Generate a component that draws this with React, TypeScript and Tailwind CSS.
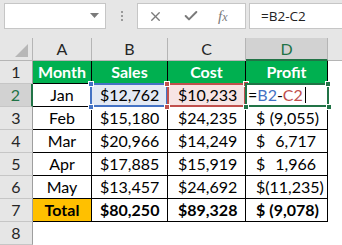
import { X, Check } from 'lucide-react';

const GREEN = 'bg-[#00b050]';

type Money = { v: string; neg?: boolean };

const rows: { m: string; s: Money; c: Money; p: Money }[] = [
  { m: 'Jan', s: { v: '12,762' }, c: { v: '10,233' }, p: { v: '2,529' } },
  { m: 'Feb', s: { v: '15,180' }, c: { v: '24,235' }, p: { v: '(9,055)', neg: true } },
  { m: 'Mar', s: { v: '20,966' }, c: { v: '14,249' }, p: { v: '6,717' } },
  { m: 'Apr', s: { v: '17,885' }, c: { v: '15,919' }, p: { v: '1,966' } },
  { m: 'May', s: { v: '13,457' }, c: { v: '24,692' }, p: { v: '(11,235)', neg: true } },
];

const RowHead = ({ n, active }: { n: number; active?: boolean }) => (
  <div
    className={
      active
        ? 'flex items-center justify-center border-b border-[#c6c6c6] border-r-2 border-r-[#217346] bg-[#d2d2d2] text-[#217346]'
        : 'flex items-center justify-center border-b border-[#c6c6c6] border-r border-r-[#9e9e9e] bg-[#e6e6e6] text-[#262626]'
    }
  >
    {n}
  </div>
);

const MoneyCell = ({ m, pl, bold }: { m: Money; pl: string; bold?: boolean }) => (
  <div
    className={`flex items-center justify-between border-b border-r border-black bg-white ${pl} ${
      m.neg ? 'pr-[8px]' : 'pr-[11px]'
    } ${bold ? 'font-bold' : ''}`}
  >
    <span>$</span>
    <span>{m.v}</span>
  </div>
);

const Handle = ({ pos, color }: { pos: string; color: string }) => (
  <span className={`absolute h-[6px] w-[6px] border border-white ${color} ${pos}`} />
);

export default function App() {
  return (
    <div className="h-[245px] w-[342px] overflow-hidden bg-[#e6e6e6] font-['Lato',sans-serif] text-[16px] text-black">
      {/* Name box + formula bar */}
      <div className="flex h-[38px] items-start pl-[4px] pt-[3px]">
        <div className="flex h-[26px] w-[102px] items-center justify-end border border-[#c6c6c6] bg-white pr-[6px]">
          <svg width="9" height="6" viewBox="0 0 9 6">
            <path d="M0 0h9L4.5 5z" fill="#7a7a7a" />
          </svg>
        </div>
        <div className="flex h-[26px] w-[31px] flex-col items-center justify-center gap-[2px]">
          <span className="h-[2px] w-[2px] bg-[#9a9a9a]" />
          <span className="h-[2px] w-[2px] bg-[#9a9a9a]" />
          <span className="h-[2px] w-[2px] bg-[#9a9a9a]" />
        </div>
        <div className="flex h-[26px] w-[109px] items-center border border-[#c6c6c6] bg-white pl-[10px] text-[#7a7a7a]">
          <X className="h-[15px] w-[15px]" strokeWidth={2.2} />
          <Check className="ml-[20px] h-[16px] w-[16px]" strokeWidth={3} />
          <span className="ml-[19px] font-['Liberation_Serif',serif] text-[15px] italic leading-none">
            f<span className="text-[12px]">x</span>
          </span>
        </div>
        <div className="ml-[3px] flex h-[26px] flex-1 items-center border border-r-0 border-[#c6c6c6] bg-white pl-[11px] font-['Open_Sans',sans-serif] text-[13.5px] text-[#222]">
          =B2-C2
        </div>
      </div>

      {/* Sheet */}
      <div className="grid grid-cols-[33px_59px_76px_78px_82px_1fr] auto-rows-[23px]">
        {/* column header row */}
        <div className="relative border-b border-r border-[#b5b5b5] bg-[#e6e6e6]">
          <svg className="absolute bottom-[3px] right-[4px]" width="13" height="13" viewBox="0 0 13 13">
            <path d="M13 0v13H0z" fill="#b7b7b7" />
          </svg>
        </div>
        {['A', 'B', 'C'].map((l) => (
          <div key={l} className="flex items-center justify-center border-b border-r border-[#b5b5b5] bg-[#e6e6e6] text-[#262626]">
            {l}
          </div>
        ))}
        <div className="flex items-center justify-center border-b-2 border-r border-b-[#217346] border-r-[#b5b5b5] bg-[#d2d2d2] text-[#217346]">
          D
        </div>
        <div className="border-b border-[#b5b5b5] bg-[#e6e6e6]" />

        {/* row 1 */}
        <RowHead n={1} />
        {['Month', 'Sales', 'Cost', 'Profit'].map((h) => (
          <div key={h} className={`flex items-center justify-center border-b border-r border-black ${GREEN} font-bold text-white`}>
            {h}
          </div>
        ))}
        <div className="bg-white" />

        {/* rows 2-6 */}
        {rows.map((r, i) => {
          const first = i === 0;
          return [
            <RowHead key={`h${i}`} n={i + 2} active={first} />,
            <div key={`a${i}`} className="flex items-center justify-center border-b border-r border-black bg-white">
              {r.m}
            </div>,
            first ? (
              <div key={`b${i}`} className="relative flex items-center justify-between border-b border-r border-black bg-[#e3e9f4] pl-[8px] pr-[11px]">
                <span>$</span>
                <span>{r.s.v}</span>
                <span className="absolute -bottom-px -left-[2px] -right-px -top-px border-2 border-[#4472c4]" />
                <Handle pos="-left-[4px] -top-[3px]" color="bg-[#4472c4]" />
                <Handle pos="-left-[4px] -bottom-[4px]" color="bg-[#4472c4]" />
              </div>
            ) : (
              <MoneyCell key={`b${i}`} m={r.s} pl="pl-[8px]" />
            ),
            first ? (
              <div key={`c${i}`} className="relative flex items-center justify-between border-b border-r border-black bg-[#f7e4e4] pl-[10px] pr-[11px]">
                <span>$</span>
                <span>{r.c.v}</span>
                <span className="absolute -bottom-px -left-px -right-px -top-px border-2 border-[#c0504d]" />
                <Handle pos="-left-[4px] -top-[3px]" color="bg-[#c0504d]" />
                <Handle pos="-left-[4px] -bottom-[4px]" color="bg-[#c0504d]" />
                <Handle pos="-right-[4px] -top-[3px]" color="bg-[#c0504d]" />
                <Handle pos="-right-[4px] -bottom-[4px]" color="bg-[#c0504d]" />
              </div>
            ) : (
              <MoneyCell key={`c${i}`} m={r.c} pl="pl-[10px]" />
            ),
            first ? (
              <div key={`d${i}`} className="relative flex items-center border-b border-r border-black bg-white pl-[2px]">
                <span>=</span>
                <span className="text-[#4472c4]">B2</span>
                <span>-</span>
                <span className="text-[#c0504d]">C2</span>
                <span className="ml-[2px] h-[16px] w-px bg-black" />
                <span className="absolute -bottom-px -left-px -right-[2px] -top-px border-2 border-[#217346]" />
                <Handle pos="-right-[4px] -top-[3px]" color="bg-[#217346]" />
                <Handle pos="-left-[3px] -bottom-[4px]" color="bg-[#217346]" />
                <Handle pos="-right-[5px] -bottom-[4px]" color="bg-[#217346]" />
              </div>
            ) : (
              <MoneyCell key={`d${i}`} m={r.p} pl="pl-[10px]" />
            ),
            <div key={`e${i}`} className="bg-white" />,
          ];
        })}

        {/* totals */}
        <RowHead n={7} />
        <div className="flex items-center justify-center border-b border-r border-black bg-[#ffc000] font-bold">Total</div>
        <MoneyCell m={{ v: '80,250' }} pl="pl-[8px]" bold />
        <MoneyCell m={{ v: '89,328' }} pl="pl-[10px]" bold />
        <MoneyCell m={{ v: '(9,078)', neg: true }} pl="pl-[10px]" bold />
        <div className="bg-white" />

        {/* row 8 */}
        <RowHead n={8} />
        <div className="col-span-5 bg-white" />
      </div>
    </div>
  );
}
